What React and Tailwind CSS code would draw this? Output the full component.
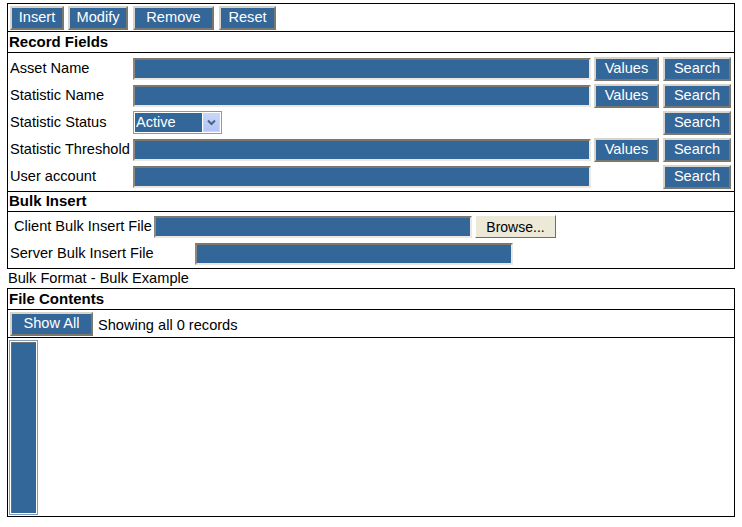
import React from "react";

const btn =
  "h-[24px] bg-[#336699] text-white text-[14.6px] leading-none border-2 border-t-[#d8d4cc] border-l-[#d8d4cc] border-r-[#7a776f] border-b-[#7a776f] flex items-center justify-center";
const inp =
  "h-[22px] bg-[#336699] border-2 border-t-[#7d786d] border-l-[#8c8880] border-r-[#ece8e0] border-b-[#ece8e0]";

function Row({ label, values = true, select = false }) {
  return (
    <div className="h-[27px] flex items-center">
      <div className="w-[125px] pl-[2px] whitespace-nowrap">{label}</div>
      {select ? (
        <div className="w-[89px] h-[23px] border border-[#7f9db9] bg-white p-[1px] flex">
          <div className="flex-1 bg-[#336699] text-white pl-[1px] flex items-center leading-none">Active</div>
          <div className="w-[17px] ml-[1px] bg-gradient-to-b from-[#c7d6fb] to-[#b3c4f5] border border-[#c8d4f8] flex items-center justify-center">
            <svg width="9" height="7" viewBox="0 0 9 7">
              <path d="M1 1.5 L4.5 5 L8 1.5" stroke="#4d6185" strokeWidth="2" fill="none" />
            </svg>
          </div>
        </div>
      ) : (
        <div className={`${inp} w-[458px]`} />
      )}
      <div className="flex-1" />
      {values && <div className={`${btn} w-[65px]`}>Values</div>}
      <div className={`${btn} w-[68px] ml-[4px] mr-[3px]`}>Search</div>
    </div>
  );
}

export default function App() {
  return (
    <div
      className="w-[742px] h-[527px] bg-white text-black text-[14.6px] pt-[3px] pl-[7px]"
      style={{ fontFamily: '"Liberation Sans", Arial, sans-serif' }}
    >
      <div className="w-[728px] border border-black">
        <div className="h-[28px] flex items-center pl-[2px] border-b border-black">
          <div className={`${btn} w-[54px]`}>Insert</div>
          <div className={`${btn} w-[60px] ml-[4px]`}>Modify</div>
          <div className={`${btn} w-[81px] ml-[5px]`}>Remove</div>
          <div className={`${btn} w-[57px] ml-[5px]`}>Reset</div>
        </div>
        <div className="h-[21px] border-b border-black font-bold text-[15px] pl-[1px] flex items-center">Record Fields</div>
        <div className="pt-[2px] pb-[1px]">
          <Row label="Asset Name" />
          <Row label="Statistic Name" />
          <Row label="Statistic Status" values={false} select />
          <Row label="Statistic Threshold" />
          <Row label="User account" values={false} />
        </div>
        <div className="border-t border-b border-black h-[21px] font-bold text-[15px] pl-[1px] flex items-center">Bulk Insert</div>
        <div className="pt-[1px] pb-[1px]">
          <div className="h-[27px] flex items-center">
            <div className="w-[146px] pl-[6px] whitespace-nowrap">Client Bulk Insert File</div>
            <div className={`${inp} w-[318px]`} />
            <div className="ml-[3px] w-[81px] h-[23px] bg-[#ece9d8] border border-t-[#ffffff] border-l-[#ffffff] border-r-[#716f64] border-b-[#716f64] flex items-center justify-center text-black text-[14px] leading-none">
              Browse...
            </div>
          </div>
          <div className="h-[27px] flex items-center">
            <div className="w-[187px] pl-[2px] whitespace-nowrap">Server Bulk Insert File</div>
            <div className={`${inp} w-[318px]`} />
          </div>
        </div>
      </div>
      <div className="h-[19px] flex items-center pl-[1px] pt-[1px]">Bulk Format - Bulk Example</div>
      <div className="w-[728px] border border-black">
        <div className="h-[21px] border-b border-black font-bold text-[15px] pl-[1px] flex items-center">File Contents</div>
        <div className="h-[28px] border-b border-black flex items-center pl-[2px]">
          <div className={`${btn} w-[83px]`}>Show All</div>
          <div className="ml-[5px] pt-[4px]">Showing all 0 records</div>
        </div>
        <div className="h-[178px] pt-[2px] pl-[1px]">
          <div className="w-[29px] h-[175px] border border-[#7f9db9] bg-white p-[1px]">
            <div className="w-full h-full bg-[#336699] border-t border-l border-[#707070]" />
          </div>
        </div>
      </div>
    </div>
  );
}
